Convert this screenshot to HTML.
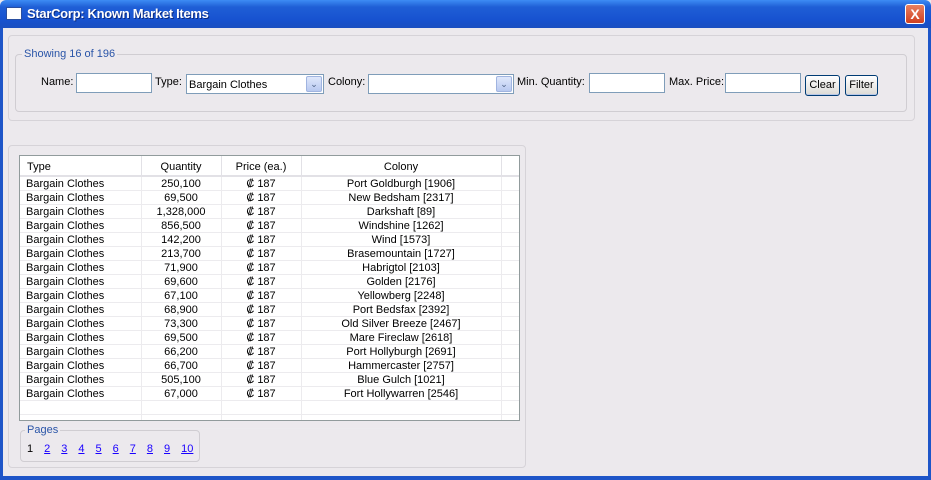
<!DOCTYPE html>
<html><head><style>
*{box-sizing:border-box;margin:0;padding:0}
body{width:931px;height:480px;overflow:hidden;font-family:"Liberation Sans",sans-serif;font-size:11px;background:#ece9ed;position:relative}
.abs{position:absolute}
.title{left:0;top:0;width:931px;height:28px;background:linear-gradient(#3d8cf4 0%,#1f5fd6 25%,#1752d0 70%,#1a4fc0 100%);border-radius:6px 6px 0 0}
.title span{position:absolute;left:27px;top:6px;color:#fff;font-weight:bold;font-size:13px;text-shadow:1px 1px #0a2a80;letter-spacing:-0.3px}
.winic{left:7px;top:8px;width:14px;height:11px;background:#fff;border-top:3px solid #fff;box-shadow:0 0 0 1px #2a4fa0}
.close{left:905px;top:4px;width:20px;height:20px;background:linear-gradient(#e88060,#d04020);border:1px solid #fff;border-radius:3px;color:#fff;font-weight:bold;font-size:14px;text-align:center;line-height:18px}
.bl{left:0;top:28px;width:3px;height:452px;background:#1e55c8}
.br{right:0;top:28px;width:3px;height:452px;background:#1e55c8}
.bb{left:0;top:476px;width:931px;height:4px;background:#1e55c8}
.panel{border:1px solid #d6d3d8;border-radius:4px}
.fs{border:1px solid #d0cdd2;border-radius:4px}
.leg{color:#2a55a8;background:#ece9ed;padding:0 2px}
.in{background:#fff;border:1px solid #7f9db9;height:20px}
.sel{background:#fff;border:1px solid #7f9db9;height:20px}
.sel .b{position:absolute;right:1px;top:1px;width:16px;height:16px;background:linear-gradient(#dfe7fb,#b8c9f0);border:1px solid #a0b4e0;border-radius:2px;color:#4d6185;font-size:9px;text-align:center;line-height:15px}
.btn{height:21px;border:1px solid #003c74;border-radius:3px;background:linear-gradient(#fff,#dcdad5);text-align:center;line-height:19px;box-shadow:inset 0 -1px #b8c8e8}
.tbl{left:19px;top:155px;width:501px;height:266px;background:#fff;border:1px solid #919b9c}
.row{position:absolute;left:0;height:14px;width:499px;border-bottom:1px solid #ecebee}
.row div{position:absolute;top:0;line-height:14px;white-space:nowrap}
.vl{position:absolute;top:0;width:1px;height:264px;background:#ecebee}
.pg a{color:#1a00ff;text-decoration:underline;margin-right:11px}
</style></head><body>
<div class="abs title"><span>StarCorp: Known Market Items</span></div>
<div class="abs winic"></div>
<div class="abs close">X</div>
<div class="abs bl"></div><div class="abs br"></div><div class="abs bb"></div>

<div class="abs panel" style="left:8px;top:35px;width:907px;height:86px"></div>
<div class="abs fs" style="left:15px;top:54px;width:892px;height:58px"></div>
<div class="abs leg" style="left:22px;top:48px">Showing 16 of 196</div>
<div class="abs" style="left:41px;top:76px">Name:</div>
<div class="abs in" style="left:76px;top:73px;width:76px"></div>
<div class="abs" style="left:155px;top:76px">Type:</div>
<div class="abs sel" style="left:186px;top:74px;width:138px"><span style="position:absolute;left:2px;top:4px">Bargain Clothes</span><div class="b">&#8964;</div></div>
<div class="abs" style="left:328px;top:76px">Colony:</div>
<div class="abs sel" style="left:368px;top:74px;width:146px"><div class="b">&#8964;</div></div>
<div class="abs" style="left:517px;top:76px">Min. Quantity:</div>
<div class="abs in" style="left:589px;top:73px;width:76px"></div>
<div class="abs" style="left:669px;top:76px">Max. Price:</div>
<div class="abs in" style="left:725px;top:73px;width:76px"></div>
<div class="abs btn" style="left:805px;top:75px;width:35px">Clear</div>
<div class="abs btn" style="left:845px;top:75px;width:33px">Filter</div>

<div class="abs panel" style="left:8px;top:145px;width:518px;height:323px"></div>
<div class="abs tbl">
<div class="vl" style="left:121px"></div><div class="vl" style="left:201px"></div><div class="vl" style="left:281px"></div><div class="vl" style="left:481px"></div>
<div class="row" style="top:0;height:21px;background:#fff;border-bottom:2px solid #e2e1e6">
<div style="left:7px;top:4px">Type</div><div style="left:121px;width:80px;text-align:center;top:4px">Quantity</div><div style="left:201px;width:80px;text-align:center;top:4px">Price (ea.)</div><div style="left:281px;width:200px;text-align:center;top:4px">Colony</div>
<div style="left:121px;top:0;width:1px;height:21px;background:#e2e1e6"></div><div style="left:201px;top:0;width:1px;height:21px;background:#e2e1e6"></div><div style="left:281px;top:0;width:1px;height:21px;background:#e2e1e6"></div><div style="left:481px;top:0;width:1px;height:21px;background:#e2e1e6"></div>
</div>
<div id="rows"></div>
</div>
<script>
var d=[["250,100","Port Goldburgh [1906]"],["69,500","New Bedsham [2317]"],["1,328,000","Darkshaft [89]"],["856,500","Windshine [1262]"],["142,200","Wind [1573]"],["213,700","Brasemountain [1727]"],["71,900","Habrigtol [2103]"],["69,600","Golden [2176]"],["67,100","Yellowberg [2248]"],["68,900","Port Bedsfax [2392]"],["73,300","Old Silver Breeze [2467]"],["69,500","Mare Fireclaw [2618]"],["66,200","Port Hollyburgh [2691]"],["66,700","Hammercaster [2757]"],["505,100","Blue Gulch [1021]"],["67,000","Fort Hollywarren [2546]"],["",""],["",""]];
var h="";d.forEach(function(r,i){var t=21+i*14;h+='<div class="row" style="top:'+t+'px">'+(r[0]?'<div style="left:6px">Bargain Clothes</div><div style="left:121px;width:80px;text-align:center">'+r[0]+'</div><div style="left:201px;width:80px;text-align:center">&#8353; 187</div><div style="left:281px;width:200px;text-align:center">'+r[1]+'</div>':'')+'</div>';});
document.getElementById("rows").outerHTML=h;
</script>
<div class="abs fs" style="left:20px;top:430px;width:180px;height:32px"></div>
<div class="abs leg" style="left:25px;top:424px">Pages</div>
<div class="abs pg" style="left:27px;top:443px"><span style="margin-right:11px">1</span><a>2</a><a>3</a><a>4</a><a>5</a><a>6</a><a>7</a><a>8</a><a>9</a><a>10</a></div>
</body></html>
